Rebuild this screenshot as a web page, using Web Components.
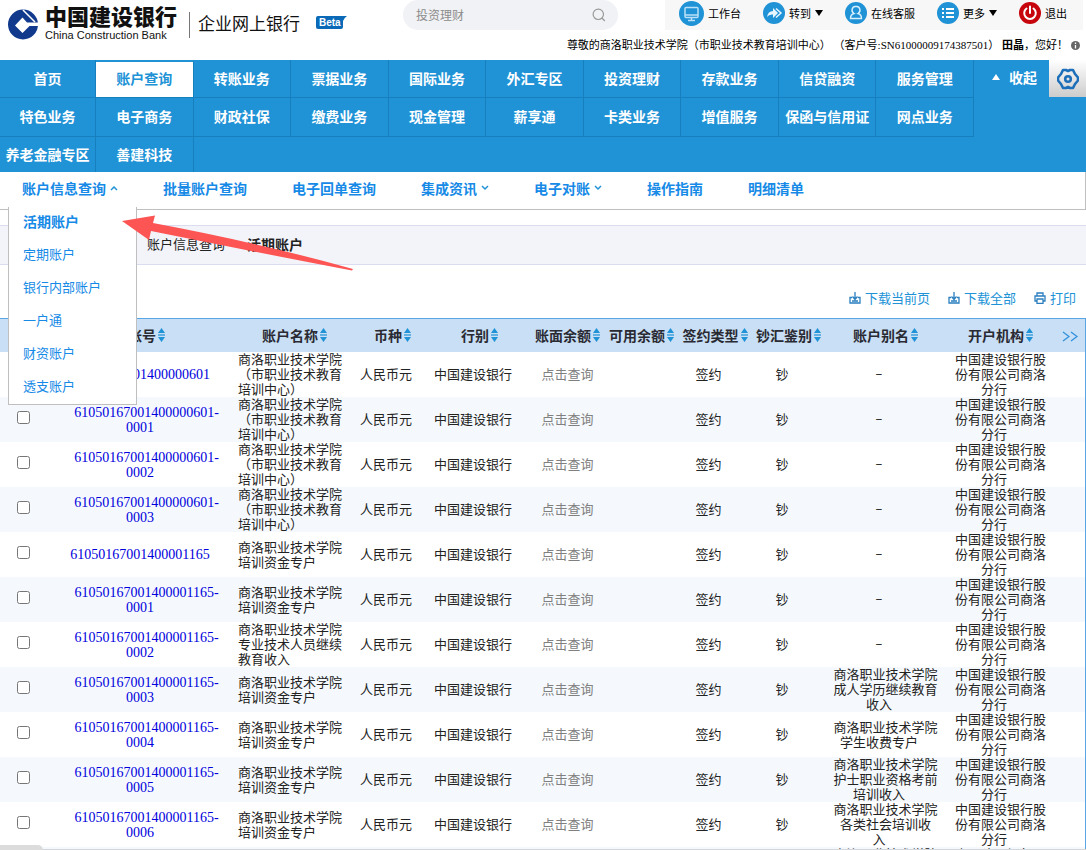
<!DOCTYPE html>
<html lang="zh-CN">
<head>
<meta charset="utf-8">
<title>企业网上银行</title>
<style>
html, body { margin: 0; height: 100%; }
body { background: #fff; color: #222; font: 13px/15px "Liberation Serif", "Noto Sans CJK SC", sans-serif; overflow: hidden; }
</style>
</head>
<body>
<bank-app></bank-app>
<script>
const define = (name, html, setup) => {
  const tpl = document.createElement('template');
  tpl.innerHTML = html;
  customElements.define(name, class extends HTMLElement {
    constructor() {
      super();
      this.attachShadow({ mode: 'open' }).append(tpl.content.cloneNode(true));
    }
    connectedCallback() { if (setup) setup(this, this.shadowRoot); }
  });
};

/* ---------- top bar ---------- */
define('bank-logo', `
<style>
:host { display: flex; align-items: center; color: #111; font-family: "Liberation Sans", "Noto Sans CJK SC", sans-serif; }
.mark { flex: none; margin-right: 6px; }
.names { display: grid; grid-template-rows: 20px 14px; width: 138px; }
.cn { font-size: 22px; font-weight: 900; line-height: 20px; white-space: nowrap; }
.en { font-size: 11px; line-height: 14px; white-space: nowrap; }
.line { width: 1px; height: 26px; background: #777; margin: 0 8px 0 6px; }
.sub { font-size: 17px; line-height: 24px; white-space: nowrap; }
.beta { position: relative; margin: 0 0 5px 16px; width: 31px; height: 13px; }
.beta svg { position: absolute; inset: 0; }
.beta span { position: relative; display: block; padding-left: 3px; font: bold 10px/13px "Liberation Sans", sans-serif; color: #fff; }
</style>
<svg class="mark" width="31" height="31" viewBox="0 0 31 31" aria-hidden="true">
<circle cx="15" cy="15.500" r="15" fill="#123a8c"/>
<path fill="#fff" d="M14.500 8.500L19 13.500H31V17H21.500L14.500 24 7 16.500Z"/>
<path fill="none" stroke="#fff" stroke-width="1.500" d="M15 1L27 13"/>
</svg>
<div class="names"><span class="cn">中国建设银行</span><span class="en">China Construction Bank</span></div>
<div class="line"></div>
<span class="sub">企业网上银行</span>
<div class="beta"><svg width="31" height="13" viewBox="0 0 31 13" aria-hidden="true"><path fill="#0b6ab8" d="M2 0H31Q28 2 27 5V11Q27 13 25 13H2Q0 13 0 11V2Q0 0 2 0Z"/></svg><span>Beta</span></div>`);

define('search-box', `
<style>
:host { display: block; }
label { display: flex; align-items: center; height: 30px; border-radius: 15px; background: #f1f2f5; padding: 0 12px 0 13px; box-sizing: border-box; }
input { flex: 1; min-width: 0; border: 0; padding: 0; background: none; outline: 0; font: 12px/16px "Noto Sans CJK SC", sans-serif; }
input::placeholder { color: #8c8c8c; opacity: 1; }
</style>
<label><input type="text" placeholder="投资理财" aria-label="搜索"><svg width="14" height="14" viewBox="0 0 14 14" fill="none" stroke="#999" stroke-width="1.2" aria-hidden="true"><circle cx="6.3" cy="6.3" r="5.2"/><path d="M10 10L12.8 13"/></svg></label>`);

define('quick-link', `
<style>
:host { display: block; }
a { display: flex; align-items: center; gap: 4px; color: #000; text-decoration: none; font: 11px/16px "Noto Sans CJK SC", sans-serif; white-space: nowrap; }
</style>
<a href="#"><slot name="icon"></slot><slot></slot></a>`);

define('bank-header', `
<style>
:host { display: grid; grid-template-columns: auto 215px minmax(0, 1fr); height: 60px; padding: 0 3px 0 8px; }
bank-logo { margin-top: 9px; height: 31px; }
.left { width: 395px; }
.right { display: grid; grid-template-columns: minmax(0, 1fr); grid-template-rows: 30px 30px; justify-items: end; min-width: 0; }
.links { display: flex; align-items: center; gap: 22px; box-sizing: border-box; width: 418px; height: 30px; padding: 0 14px 4px; background: #f7f7f7; }
.hello { display: flex; align-items: center; gap: 3px; padding-right: 3px; color: #000; font: 11px/16px "Liberation Serif", "Noto Sans CJK SC", sans-serif; white-space: nowrap; }
svg { display: block; flex: none; }
</style>
<div class="left"><bank-logo></bank-logo></div>
<search-box></search-box>
<div class="right">
<div class="links">
<quick-link><svg slot="icon" width="25" height="25" viewBox="0 0 25 25"><circle cx="12.5" cy="12.5" r="12.5" fill="#2092d6"/><g fill="none" stroke="#b9e0f7" stroke-width="1.5"><rect x="6" y="6.5" width="13" height="10" rx="1"/><path d="M6 14H19M12.5 17v2M9 19.5h7"/></g></svg>工作台</quick-link>
<quick-link><svg slot="icon" width="22" height="22" viewBox="0 0 22 22"><circle cx="11" cy="11" r="11" fill="#2092d6"/><path fill="#e8f6ff" d="M4 15Q5 9 10 9V6L15 11 10 16V12.500Q6 12 4 15Z"/><path fill="none" stroke="#e8f6ff" stroke-width="1.500" d="M13 6.500L18 11 13 15.500"/></svg>转到<svg width="8" height="7"><path d="M0 0H8L4 6Z"/></svg></quick-link>
<quick-link><svg slot="icon" width="22" height="22" viewBox="0 0 22 22"><circle cx="11" cy="11" r="11" fill="#2092d6"/><path fill="none" stroke="#d9f0ff" stroke-width="1.400" d="M11 4.500A3.400 3.700 0 0 1 13 11.500Q16.500 12.500 16.500 16.500H5.500Q5.500 12.500 9 11.500A3.400 3.700 0 0 1 11 4.500Z"/></svg>在线客服</quick-link>
<quick-link><svg slot="icon" width="22" height="22" viewBox="0 0 22 22"><circle cx="11" cy="11" r="11" fill="#2092d6"/><path stroke="#fff" stroke-width="2" d="M5 7H7M9 7H17M5 11H7M9 11H17M5 15H7M9 15H17"/></svg>更多<svg width="8" height="7"><path d="M0 0H8L4 6Z"/></svg></quick-link>
<quick-link><svg slot="icon" width="22" height="22" viewBox="0 0 22 22"><circle cx="11" cy="11" r="11" fill="#c7050d"/><path fill="none" stroke="#fff" stroke-width="2" stroke-linecap="round" d="M7.500 6.500A5.800 5.800 0 1 0 14.500 6.500M11 4.500V11"/></svg>退出</quick-link>
</div>
<div class="hello"><span>尊敬的商洛职业技术学院（市职业技术教育培训中心） （客户号:SN61000009174387501） <b>田晶</b>，您好！</span><svg width="9" height="9"><circle cx="4.500" cy="4.500" r="4.500" fill="#666"/><path stroke="#fff" stroke-width="1.300" d="M4.500 1.500V3M4.500 4V7.500"/></svg></div>
</div>`);

/* ---------- main navigation ---------- */
define('main-nav', `
<style>
:host { display: flex; background: #2092d6; color: #fff; font: bold 14px/20px "Noto Sans CJK SC", sans-serif; }
nav { flex: 1; display: grid; grid-template-columns: 96px repeat(9, 1fr); grid-template-rows: 38px 39px 35px; min-width: 0; }
a { display: flex; align-items: center; justify-content: center; box-sizing: border-box; padding-bottom: 2px; border-right: 1px solid #187fbe; border-bottom: 1px solid #187fbe; color: #fff; text-decoration: none; white-space: nowrap; }
a.last { border-bottom: 0; }
a.on { background: #fff; color: #2092d6; border-top: 2px solid #2092d6; padding-bottom: 4px; }
.side { width: 112px; display: flex; align-items: flex-start; }
.fold { flex: 1; display: flex; align-items: center; gap: 9px; height: 34px; padding: 0 0 0 18px; border: 0; background: none; color: #fff; font: inherit; }
.gear { width: 37px; height: 37px; border: 0; padding: 0; display: grid; place-items: center; background: linear-gradient(#fff, #ccc); }
</style>
<nav></nav>
<div class="side"><button class="fold"><svg width="8" height="6"><path fill="#fff" d="M4 0L8 6H0Z"/></svg>收起</button><button class="gear" aria-label="设置"><svg width="22" height="22" viewBox="0 0 22 22" fill="none" stroke="#1c6fb8" stroke-width="2.600" stroke-linejoin="round"><path d="M6 2H9L11 3 13 2H16L18 6 21 9.500V12.500L18 16 16 20H13L11 19 9 20H6L4 16 1 12.500V9.500L4 6Z"/><circle cx="11" cy="11" r="2.800"/></svg></button></div>`,
(host, root) => {
  const names = '首页 账户查询 转账业务 票据业务 国际业务 外汇专区 投资理财 存款业务 信贷融资 服务管理 特色业务 电子商务 财政社保 缴费业务 现金管理 薪享通 卡类业务 增值服务 保函与信用证 网点业务 养老金融专区 善建科技'.split(' ');
  root.querySelector('nav').innerHTML = names.map((n, i) =>
    `<a href="#" class="${i === 1 ? 'on' : ''}${i > 19 ? 'last' : ''}">${n}</a>`).join('');
});

/* ---------- second level with its open menu ---------- */
define('sub-nav', `
<style>
:host { display: block; position: relative; z-index: 2; border-bottom: 1px solid #bfbfbf; border-right: 1px solid #bfbfbf; font: bold 14px/20px "Noto Sans CJK SC", sans-serif; }
a { color: #168ae6; text-decoration: none; white-space: nowrap; }
nav { display: flex; gap: 45px; padding: 0 22px 5px; height: 37px; align-items: center; box-sizing: border-box; }
nav a { display: flex; align-items: center; gap: 4px; }
ul { position: absolute; left: 8px; top: 35px; width: 129px; box-sizing: border-box; margin: 0; padding: 0 0 0 14px; list-style: none; background: #fff; border: 1px solid #bfbfbf; border-top: 0; font-size: 13px; font-weight: normal; }
li { height: 33px; display: flex; align-items: center; box-sizing: border-box; padding-bottom: 5px; }
li:first-child { font-size: 14px; font-weight: bold; }
li:last-child { height: 32px; }
</style>
<nav></nav>
<ul></ul>`,
(host, root) => {
  const caret = up => `<svg width="8" height="6" fill="none" stroke="#2092d6" stroke-width="1.500"><path d="${up ? 'M1 5L4 2 7 5' : 'M1 1L4 4 7 1'}"/></svg>`;
  const tabs = [['账户信息查询', caret(true)], ['批量账户查询', ''], ['电子回单查询', ''], ['集成资讯', caret(false)], ['电子对账', caret(false)], ['操作指南', ''], ['明细清单', '']];
  root.querySelector('nav').innerHTML = tabs.map(([t, c]) => `<a href="#">${t}${c}</a>`).join('');
  root.querySelector('ul').innerHTML = ['活期账户', '定期账户', '银行内部账户', '一户通', '财资账户', '透支账户']
    .map(t => `<li><a href="#">${t}</a></li>`).join('');
});

define('crumb-bar', `
<style>
:host { display: flex; align-items: center; gap: 9px; height: 40px; box-sizing: border-box; margin-top: 15px; padding: 0 0 3px 134px; background: #f3f4fa; border: 1px solid #dcdcf0; border-width: 1px 0; font: 13px/18px "Noto Sans CJK SC", sans-serif; white-space: nowrap; }
a { color: #222; text-decoration: none; }
b { font-size: 14px; }
svg { width: 4px; height: 8px; fill: none; stroke: #444; }
</style>
<svg><path d="M0 1L3 4 0 7"/></svg><a href="#">账户信息查询</a><svg><path d="M0 1L3 4 0 7"/></svg><b>活期账户</b>`);

define('table-tools', `
<style>
:host { display: flex; justify-content: flex-end; align-items: center; gap: 18px; height: 53px; box-sizing: border-box; padding: 12px 10px 0 0; }
a { display: flex; align-items: center; gap: 4px; color: #2092d6; text-decoration: none; font: 13px/18px "Noto Sans CJK SC", sans-serif; white-space: nowrap; }
svg { width: 12px; height: 12px; fill: none; stroke: #2a7fc0; stroke-width: 1.300; }
</style>
<a href="#"><svg><path d="M3 5.500H1V11H11V5.500H9M6 0V7M3.500 4.500L6 7.500 8.500 4.500M3 9H9"/></svg>下载当前页</a>
<a href="#"><svg><path d="M3 5.500H1V11H11V5.500H9M6 0V7M3.500 4.500L6 7.500 8.500 4.500M3 9H9"/></svg>下载全部</a>
<a href="#"><svg><path d="M3 4V1H9V4M3 9H1V4H11V9H9M3 7H9V11.300H3Z"/></svg>打印</a>`);

/* ---------- accounts ---------- */
define('account-table', `
<style>
:host { display: block; border-right: 1px solid #5aa5e3; border-top: 1px solid #5aa5e3; font: 13px/15px "Liberation Serif", "Noto Sans CJK SC", sans-serif; color: #222; }
table { width: 100%; table-layout: fixed; border-collapse: collapse; }
th, td { padding: 0 1px 0 0; text-align: center; vertical-align: middle; white-space: nowrap; }
th { height: 31px; padding-bottom: 2px; background: #c8dff5; }
th button { display: inline-flex; align-items: center; gap: 2px; padding: 0; border: 0; background: none; color: #2a2a33; font: bold 14px/20px "Noto Sans CJK SC", sans-serif; vertical-align: middle; }
td { height: 45px; }
tr:nth-child(even) td { background: #f5f9fd; }
td:first-child { text-align: left; padding-left: 17px; }
input { display: block; width: 13px; height: 13px; margin: 0 0 4px; }
td.name { text-align: left; padding-left: 5px; }
td.no { font-size: 14px; }
td.dash { font-family: "Liberation Mono", monospace; }
.no a { color: #0000dc; text-decoration: none; }
.ask { color: #808080; text-decoration: none; }
i { display: inline-block; width: 13px; }
</style>
<table>
<colgroup></colgroup>
<thead><tr></tr></thead>
<tbody></tbody>
</table>`,
(host, root) => {
  const cols = [['', 61], ['账号', 172], ['账户名称', 124], ['币种', 72], ['行别', 102], ['账面余额', 74], ['可用余额', 74], ['签约类型', 73], ['钞汇鉴别', 74], ['账户别名', 120], ['开户机构', 110], ['>>', 29]];
  const sort = '<svg width="7" height="14" fill="#2092d6"><path d="M3.500 0L7 5H0ZM3.500 14L0 9H7Z"/><path opacity=".6" d="M0 6H7V8H0Z"/></svg>';
  const more = '<svg width="16" height="11" fill="none" stroke="#2e8fdc" stroke-width="1.200"><path d="M1 1L7 5.500 1 10M9 1L15 5.500 9 10"/></svg>';
  root.querySelector('colgroup').innerHTML = cols.map(c => `<col style="width:${c[1]}px">`).join('');
  root.querySelector('thead tr').innerHTML = cols.map(([t]) =>
    !t ? '<th></th>' : t === '>>' ? `<th><button aria-label="更多列">${more}</button></th>` : `<th><button>${t}${sort}</button></th>`).join('');

  const A = '商洛职业技术学院|（市职业技术教育|培训中心）';
  const B = '商洛职业技术学院|培训资金专户';
  const a = '61050167001400000601', b = '61050167001400001165';
  const rows = [
    [a, A, '–'], [a + '-|0001', A, '–'], [a + '-|0002', A, '–'], [a + '-|0003', A, '–'],
    [b, B, '–'], [b + '-|0001', B, '–'], [b + '-|0002', '商洛职业技术学院|专业技术人员继续|教育收入', '–'],
    [b + '-|0003', B, '商洛职业技术学院|成人学历继续教育|收入'],
    [b + '-|0004', B, '商洛职业技术学院|学生收费专户'],
    [b + '-|0005', B, '商洛职业技术学院|护士职业资格考前|培训收入'],
    [b + '-|0006', B, '商洛职业技术学院|各类社会培训收|入'],
    [b + '-|0007', B, '商洛职业技术学院|各类社会培训收|入']
  ];
  const br = s => s.split('|').join('<br>');
  root.querySelector('tbody').innerHTML = rows.map(([no, name, alias]) => `<tr>
<td><input type="checkbox" aria-label="${no.replace('|', '')}"></td>
<td class="no"><a href="#">${br(no)}</a><i></i></td>
<td class="name">${br(name)}</td>
<td>人民币元<i></i></td>
<td>中国建设银行<i></i></td>
<td><a class="ask" href="#">点击查询</a></td>
<td></td>
<td>签约<i></i></td>
<td>钞<i></i></td>
<td class="${alias === '–' ? 'dash' : ''}">${br(alias)}<i></i></td>
<td>中国建设银行股<br>份有限公司商洛<br>分行<i></i></td>
<td></td></tr>`).join('');
});

define('bank-app', `
<style>
:host { display: block; position: relative; height: 100vh; overflow: hidden; }
.pointer { position: absolute; left: 120px; top: 210px; z-index: 3; pointer-events: none; }
.status { position: absolute; left: 0; right: 0; bottom: 0; height: 1px; background: #d3d6da; z-index: 4; }
.status::before { content: ""; position: absolute; left: 0; bottom: 0; width: 43px; height: 5px; background: #dcdcdc; border-radius: 0 5px 0 0; }
</style>
<bank-header></bank-header>
<main-nav></main-nav>
<sub-nav></sub-nav>
<crumb-bar></crumb-bar>
<table-tools></table-tools>
<account-table></account-table>
<svg class="pointer" width="240" height="66" aria-hidden="true"><path fill="#fd5454" d="M2 11L35 5.500 33 13Q140 33 233 59L232 60.500Q140 43 31 21L29 30Z"/></svg>
<div class="status"></div>`);
</script>
</body>
</html>
